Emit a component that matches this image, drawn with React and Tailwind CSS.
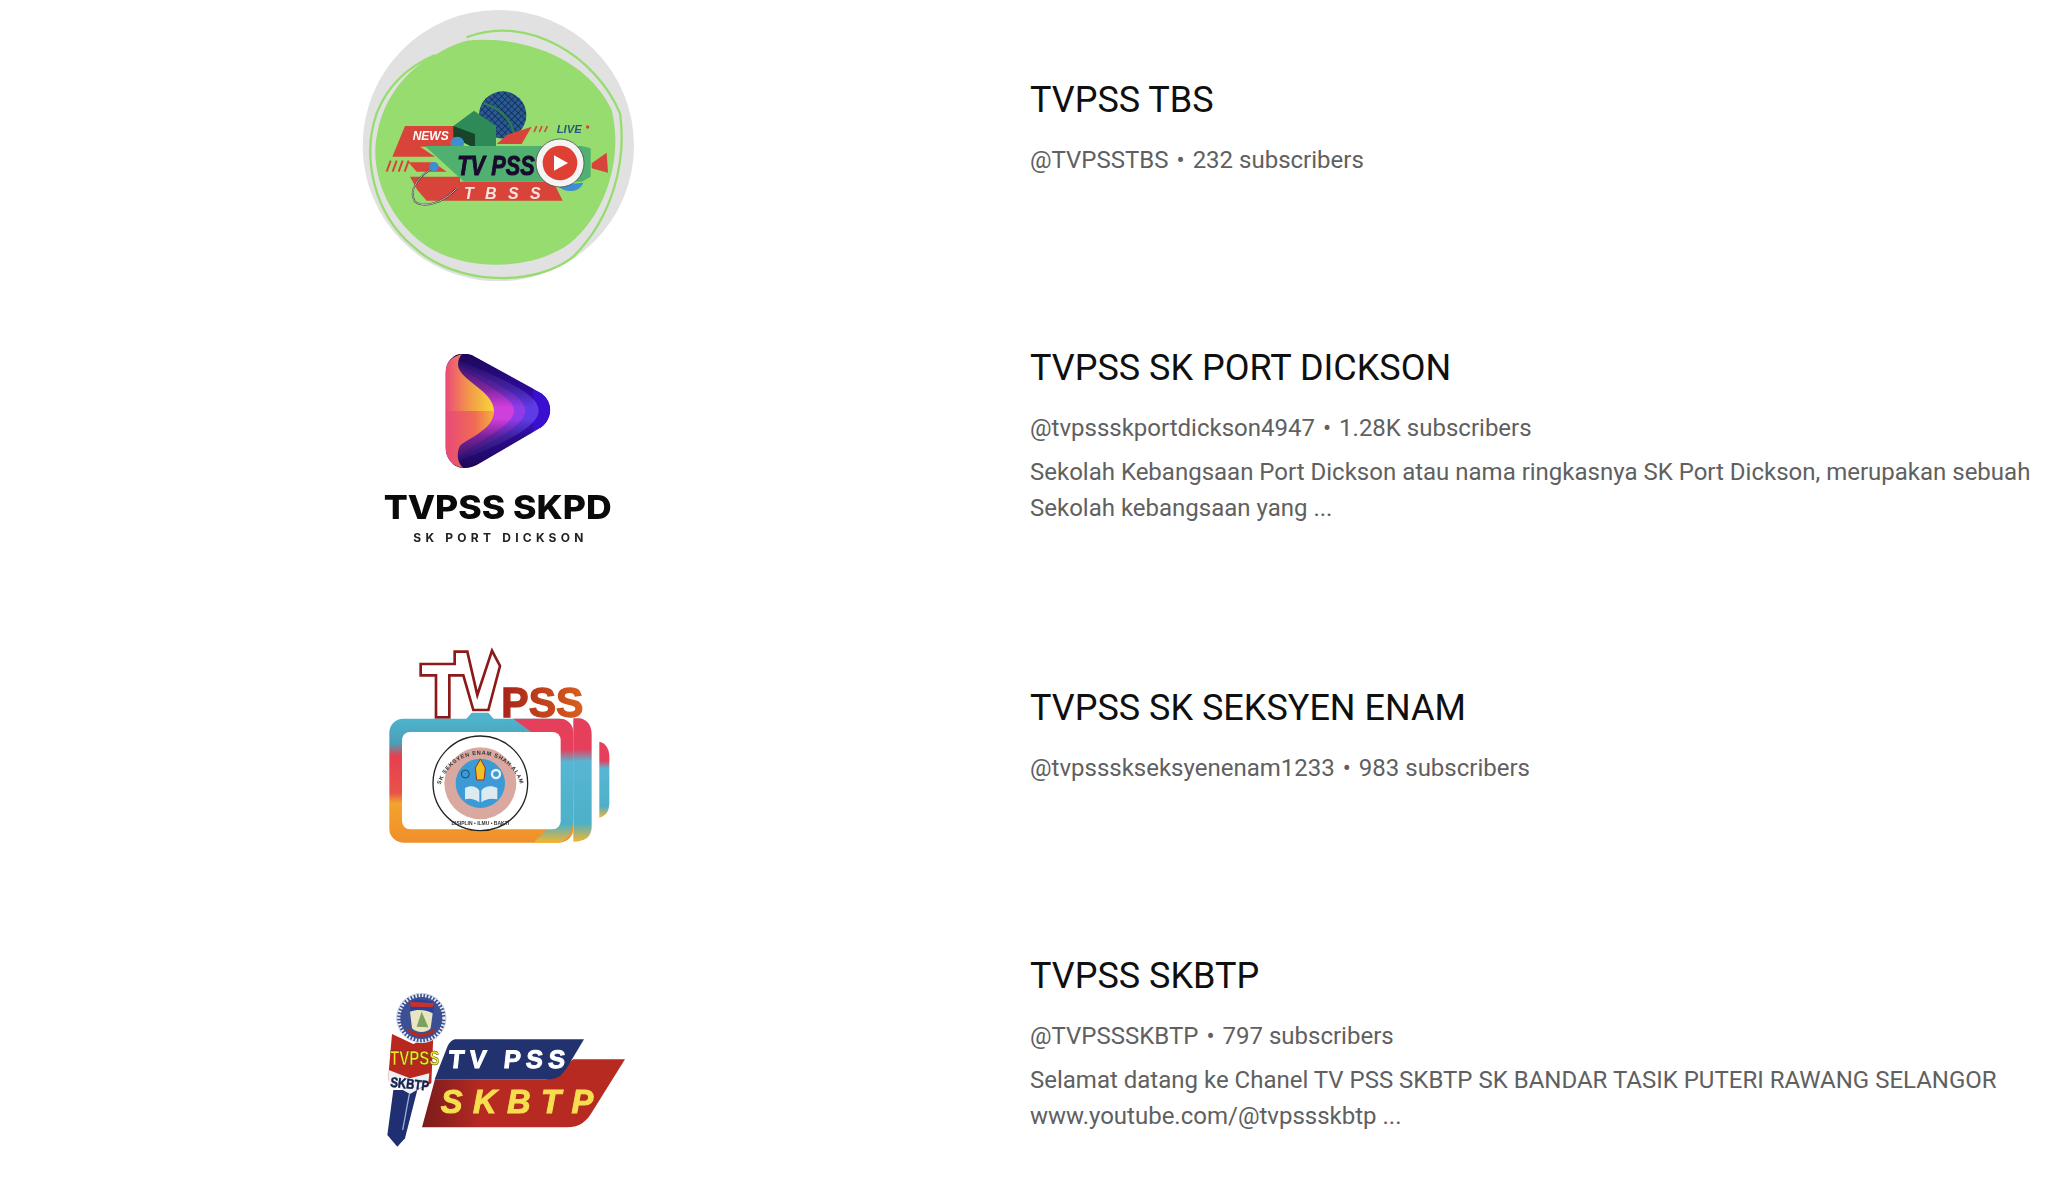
import React from 'react';

const sans = '"Liberation Sans", Arial, sans-serif';

function LogoTbs() {
  return (
    <svg viewBox="66 27 816 816" className="w-[272px] h-[272px] blur-[0.6px]">
      <circle cx="475" cy="437" r="407" fill="#e1e1e1" />
      <path d="M380 122 C540 105 740 170 815 330 C850 470 800 640 690 730 C590 805 400 820 270 745 C150 670 85 520 112 400 C130 290 210 200 285 165 C310 150 345 130 380 122 Z" fill="#97dc6e" />
      <path d="M380 112 C560 40 770 170 840 340 C860 480 820 650 700 770 C590 860 350 860 220 740 C100 640 65 470 110 340 C145 250 215 195 285 165" fill="none" stroke="#97dc6e" strokeWidth="7" />
      {/* mic head */}
      <defs>
        <pattern id="mesh" width="14" height="14" patternUnits="userSpaceOnUse" patternTransform="rotate(45)">
          <rect width="14" height="14" fill="#2a5a94" />
          <path d="M0 0H14M0 0V14" stroke="#0e2448" strokeWidth="4" />
        </pattern>
      </defs>
      <circle cx="488" cy="345" r="71" fill="url(#mesh)" />
      <path d="M430 310 C470 320 510 350 522 400" fill="none" stroke="#2c7a54" strokeWidth="7" />
      {/* red banners */}
      <polygon points="195,378 345,378 345,440 240,440 285,470 157,470" fill="#d8443a" />
      <polygon points="575,380 545,432 470,432 500,405" fill="#d8443a" />
      <polygon points="205,487 280,487 320,515 230,515" fill="#d8443a" />
      <polygon points="210,530 360,530 360,545 640,545 668,602 330,602 260,602 232,570" fill="#d8443a" />
      <path d="M140 515 L152 482 M158 515 L170 482 M176 515 L188 482 M194 515 L206 482" stroke="#d8443a" strokeWidth="6" />
      <path d="M582 396 L590 378 M598 396 L606 378 M614 396 L622 378" stroke="#d8443a" strokeWidth="5" />
      <text x="218" y="421" fontFamily={sans} fontSize="36" fontWeight="700" fontStyle="italic" fill="#fff">NEWS</text>
      <text x="650" y="399" fontFamily={sans} fontSize="34" fontWeight="700" fontStyle="italic" fill="#2b5a7c">LIVE</text>
      <circle cx="743" cy="381" r="5" fill="#d8443a" />
      {/* green cube */}
      <polygon points="340,378 402,332 468,378 468,440 405,445 340,412" fill="#2e8b57" />
      <polygon points="340,378 405,402 405,445 340,412" fill="#17452c" />
      <circle cx="352" cy="430" r="20" fill="#3f8fd0" />
      {/* camera body */}
      <polygon points="255,438 725,438 752,445 752,530 725,545 372,545" fill="#4fb06f" />
      <polygon points="755,490 800,458 804,518 755,505" fill="#d8443a" />
      <path d="M285 500 C230 530 205 575 225 605 C250 625 310 610 350 565" fill="none" stroke="#333" strokeWidth="5" />
      <path d="M285 500 C230 530 205 575 225 605 C250 625 310 610 350 565" fill="none" stroke="#fff" strokeWidth="2" />
      <circle cx="282" cy="500" r="14" fill="#3f8fd0" />
      <path d="M650 555 C680 585 720 575 730 548 Z" fill="#3f8fd0" />
      <text x="352" y="526" fontFamily={sans} fontSize="84" fontWeight="700" fontStyle="italic" fill="#1a0b2e" stroke="#1a0b2e" strokeWidth="3" textLength="232" lengthAdjust="spacingAndGlyphs">TV PSS</text>
      <text x="372" y="597" fontFamily={sans} fontSize="48" fontWeight="700" fontStyle="italic" fill="#f6e4de" letterSpacing="34">TBSS</text>
      <circle cx="660" cy="489" r="72" fill="#f4f4f4" stroke="#333" strokeWidth="2" />
      <circle cx="660" cy="489" r="52" fill="#df4034" />
      <polygon points="642,466 642,512 684,489" fill="#fff" />
    </svg>
  );
}

function LogoSkpd() {
  const body = 'M316 130 C316 85 350 62 395 75 L605 190 C640 215 640 265 605 292 L410 405 C360 430 316 400 316 350 Z';
  return (
    <svg viewBox="66 -51 816 816" className="w-[272px] h-[272px] blur-[0.6px]">
      <defs>
        <clipPath id="playClip">
          <path d={body} />
        </clipPath>
        <linearGradient id="warmTop" x1="0" y1="0" x2="1" y2="0">
          <stop offset="0" stopColor="#ea4a78" />
          <stop offset="0.5" stopColor="#f39a48" />
          <stop offset="1" stopColor="#f8d63a" />
        </linearGradient>
        <linearGradient id="warmBottom" x1="0" y1="0" x2="1" y2="0">
          <stop offset="0" stopColor="#e84a78" />
          <stop offset="0.6" stopColor="#f06a55" />
          <stop offset="1" stopColor="#f6b03a" />
        </linearGradient>
        <linearGradient id="shade" x1="0" y1="0" x2="0" y2="1">
          <stop offset="0" stopColor="#1c0650" stopOpacity="0.95" />
          <stop offset="0.3" stopColor="#1c0650" stopOpacity="0.45" />
          <stop offset="0.46" stopColor="#1c0650" stopOpacity="0" />
          <stop offset="0.56" stopColor="#1c0650" stopOpacity="0" />
          <stop offset="0.72" stopColor="#1c0650" stopOpacity="0.5" />
          <stop offset="1" stopColor="#1c0650" stopOpacity="0.95" />
        </linearGradient>
      </defs>
      <g clipPath="url(#playClip)">
        <path d={body} fill="#3a0fcf" />
        <path d="M340 85 C440 130 596 180 596 242 C596 300 440 360 340 400 Z" fill="#5f3be6" />
        <path d="M340 90 C420 140 556 190 556 242 C556 295 420 350 340 395 Z" fill="#8f3ce8" />
        <path d="M340 95 C400 150 522 195 522 242 C522 290 400 340 340 390 Z" fill="#cf3fdc" />
        <rect x="340" y="72" width="240" height="346" fill="url(#shade)" />
        <path d="M316 243 V130 C316 100 330 82 366 72 C352 88 350 110 362 125 C385 160 462 190 462 243 Z" fill="url(#warmTop)" />
        <path d="M316 243 H462 C462 295 395 320 362 345 C350 362 348 395 370 414 C335 408 316 385 316 350 Z" fill="url(#warmBottom)" />
      </g>
      <text x="473" y="566" textAnchor="middle" fontFamily='"Inter", sans-serif' fontSize="100" fontWeight="800" fill="#0a0a0a" textLength="684" lengthAdjust="spacingAndGlyphs">TVPSS SKPD</text>
      <text x="475" y="636" textAnchor="middle" fontFamily='"Inter", sans-serif' fontSize="36" fontWeight="700" fill="#222" textLength="510" lengthAdjust="spacing">SK PORT DICKSON</text>
    </svg>
  );
}

function LogoEnam() {
  return (
    <svg viewBox="6 -39 816 816" className="w-[272px] h-[272px] blur-[0.6px]">
      <defs>
        <linearGradient id="tvband" x1="0" y1="0" x2="0" y2="1">
          <stop offset="0" stopColor="#4fb3cc" />
          <stop offset="0.2" stopColor="#4a9fb8" />
          <stop offset="0.3" stopColor="#e63f4e" />
          <stop offset="0.6" stopColor="#e8534a" />
          <stop offset="0.68" stopColor="#f2a32e" />
          <stop offset="1" stopColor="#f08f2a" />
        </linearGradient>
        <linearGradient id="tvright" x1="0" y1="0" x2="0" y2="1">
          <stop offset="0" stopColor="#e63f5c" />
          <stop offset="0.25" stopColor="#e63f5c" />
          <stop offset="0.35" stopColor="#58b6d4" />
          <stop offset="0.85" stopColor="#4db0c8" />
          <stop offset="1" stopColor="#f5b52e" />
        </linearGradient>
        <linearGradient id="pss" x1="0" y1="0" x2="1" y2="0">
          <stop offset="0" stopColor="#a8221a" />
          <stop offset="1" stopColor="#d8601c" />
        </linearGradient>
      </defs>
      <path d="M182 102 H284 V65 H322 L352 195 L396 62 L420 108 L385 240 H340 L310 136 H268 V262 H228 V136 H182 Z" fill="none" stroke="#8c1a1a" strokeWidth="8" />
      <text x="424" y="260" fontFamily={sans} fontSize="130" fontWeight="700" fill="url(#pss)" stroke="url(#pss)" strokeWidth="4" textLength="246" lengthAdjust="spacingAndGlyphs">PSS</text>
      <path d="M718 335 C740 340 748 360 748 380 V520 C748 545 735 560 718 563 Z" fill="url(#tvright)" />
      <path d="M640 265 H660 C685 270 695 290 695 315 V590 C695 615 680 635 640 635 Z" fill="url(#tvright)" />
      <path d="M318 268 L335 248 H385 L402 268 Z" fill="#4fb3cc" />
      <rect x="88" y="266" width="552" height="372" rx="42" fill="url(#tvband)" />
      <path d="M460 266 H598 C625 266 640 285 640 310 V560 C640 610 620 638 590 638 H520 L600 560 V370 Z" fill="url(#tvright)" />
      <rect x="126" y="306" width="476" height="292" rx="24" fill="#fff" />
      <g transform="translate(0 12)">
        <circle cx="361" cy="448" r="142" fill="#fff" stroke="#222" strokeWidth="4" />
        <circle cx="361" cy="448" r="108" fill="#d9a8a0" />
        <circle cx="361" cy="448" r="74" fill="#3c9ad6" />
        <path d="M315 462 C335 452 350 458 358 470 V505 C345 495 330 492 315 496 Z" fill="#dcebf2" />
        <path d="M412 462 C392 452 372 458 364 470 V505 C377 495 392 492 412 496 Z" fill="#dcebf2" />
        <path d="M361 375 L376 402 L372 438 H350 L346 402 Z" fill="#f0c020" stroke="#a03020" strokeWidth="3" />
        <circle cx="408" cy="420" r="12" fill="none" stroke="#e8f2f6" strokeWidth="7" />
        <circle cx="316" cy="420" r="12" fill="none" stroke="#1d4a6a" strokeWidth="3" />
        <path id="sealTop" d="M238 470 A124 124 0 0 1 484 470" fill="none" />
        <text fontFamily={sans} fontSize="17" fontWeight="700" fill="#333">
          <textPath href="#sealTop" startOffset="50%" textAnchor="middle" letterSpacing="2">SK SEKSYEN ENAM SHAH ALAM</textPath>
        </text>
        <text x="361" y="574" textAnchor="middle" fontFamily={sans} fontSize="15" fontWeight="700" fill="#333">DISIPLIN • ILMU • BAKTI</text>
      </g>
    </svg>
  );
}

function LogoSkbtp() {
  return (
    <svg viewBox="6 -147 816 816" className="w-[272px] h-[272px] blur-[0.5px]">
      <defs>
        <linearGradient id="redband" x1="0" y1="0" x2="1" y2="0">
          <stop offset="0" stopColor="#7a1c1c" />
          <stop offset="0.3" stopColor="#b72a22" />
          <stop offset="1" stopColor="#b72a22" />
        </linearGradient>
      </defs>
      <path d="M225 328 H560 L640 268 H795 L700 420 C680 455 660 472 620 472 H186 Z" fill="url(#redband)" />
      <path d="M288 208 H672 L620 295 C600 322 590 328 560 328 H224 L262 230 C270 215 278 208 288 208 Z" fill="#22326f" />
      <path d="M100 360 H172 L135 505 L112 530 L82 495 Z" fill="#1f2f72" />
      <path d="M148 372 L128 480" stroke="#9db2d4" strokeWidth="4" />
      <path d="M96 192 L160 222 L220 196 L214 340 L150 370 L84 330 Z" fill="#b8281f" />
      <path d="M86 300 L150 325 L208 310 L205 340 L150 372 L84 335 Z" fill="#eef0f4" />
      <circle cx="184" cy="144" r="74" fill="#3b4f93" stroke="#cfd5e6" strokeWidth="3" />
      <circle cx="184" cy="144" r="68" fill="none" stroke="#eef0f6" strokeWidth="10" strokeDasharray="5 5" />
      <path d="M150 95 C175 85 200 88 224 100 L218 130 C195 118 170 118 152 125 Z" fill="#2c3f9a" />
      <path d="M150 95 L224 100 L218 112 L152 110 Z" fill="#c8322a" />
      <path d="M150 125 C170 118 195 118 218 130 L212 175 C200 190 170 190 156 175 Z" fill="#e9e4c2" />
      <path d="M170 170 L185 125 L205 172 Z" fill="#7aa25c" />
      <path d="M140 172 C165 196 205 196 228 172 L222 186 C200 205 165 205 146 186 Z" fill="#b8281f" />
      <text x="90" y="284" fontFamily={sans} fontSize="62" fontWeight="700" fill="#f4e624" stroke="#3a3a10" strokeWidth="1.5" textLength="148" lengthAdjust="spacingAndGlyphs">TVPSS</text>
      <text x="90" y="350" fontFamily={sans} fontSize="42" fontWeight="700" fill="#14204f" stroke="#14204f" strokeWidth="1.5" textLength="116" lengthAdjust="spacingAndGlyphs" transform="rotate(6 90 350)">SKBTP</text>
      <text x="262" y="295" fontFamily={sans} fontSize="76" fontWeight="700" fill="#fff" stroke="#fff" strokeWidth="3" textLength="350" lengthAdjust="spacing" transform="skewX(-6) translate(32 0)">TV PSS</text>
      <text x="242" y="430" fontFamily={sans} fontSize="98" fontWeight="700" fontStyle="italic" fill="#f6df4e" stroke="#f6df4e" strokeWidth="3" textLength="458" lengthAdjust="spacing">SKBTP</text>
    </svg>
  );
}

const channels = [
  { name: 'TVPSS TBS', handle: '@TVPSSTBS', subs: '232 subscribers', logo: <LogoTbs />, rowH: 'h-[268px]' },
  {
    name: 'TVPSS SK PORT DICKSON',
    handle: '@tvpssskportdickson4947',
    subs: '1.28K subscribers',
    desc: 'Sekolah Kebangsaan Port Dickson atau nama ringkasnya SK Port Dickson, merupakan sebuah Sekolah kebangsaan yang ...',
    logo: <LogoSkpd />,
    rowH: 'h-[340px]',
  },
  { name: 'TVPSS SK SEKSYEN ENAM', handle: '@tvpssskseksyenenam1233', subs: '983 subscribers', logo: <LogoEnam />, rowH: 'h-[268px]' },
  {
    name: 'TVPSS SKBTP',
    handle: '@TVPSSSKBTP',
    subs: '797 subscribers',
    desc: 'Selamat datang ke Chanel TV PSS SKBTP SK BANDAR TASIK PUTERI RAWANG SELANGOR www.youtube.com/@tvpssskbtp ...',
    logo: <LogoSkbtp />,
    rowH: 'h-[340px]',
  },
];

function ChannelRow({ channel }) {
  return (
    <div className={`flex shrink-0 ${channel.rowH}`}>
      <div className="w-[1030px] shrink-0 pr-[34px] flex items-center justify-center">
        <div className="w-[272px] h-[272px] shrink-0">{channel.logo}</div>
      </div>
      <div className="w-[1012px] pt-[63px]">
        <h3 className="text-[36px] leading-[52px] font-normal text-[#0f0f0f]">{channel.name}</h3>
        <div className="mt-4 flex items-center text-[24px] leading-9 text-[#606060]">
          <span>{channel.handle}</span>
          <span className="mx-2">•</span>
          <span>{channel.subs}</span>
        </div>
        {channel.desc && <p className="mt-2 text-[24px] leading-9 text-[#606060]">{channel.desc}</p>}
      </div>
    </div>
  );
}

export default function App() {
  return (
    <div className="h-screen overflow-hidden bg-white pt-[11px] flex flex-col font-['Roboto',sans-serif]">
      {channels.map((c) => (
        <ChannelRow key={c.name} channel={c} />
      ))}
    </div>
  );
}
